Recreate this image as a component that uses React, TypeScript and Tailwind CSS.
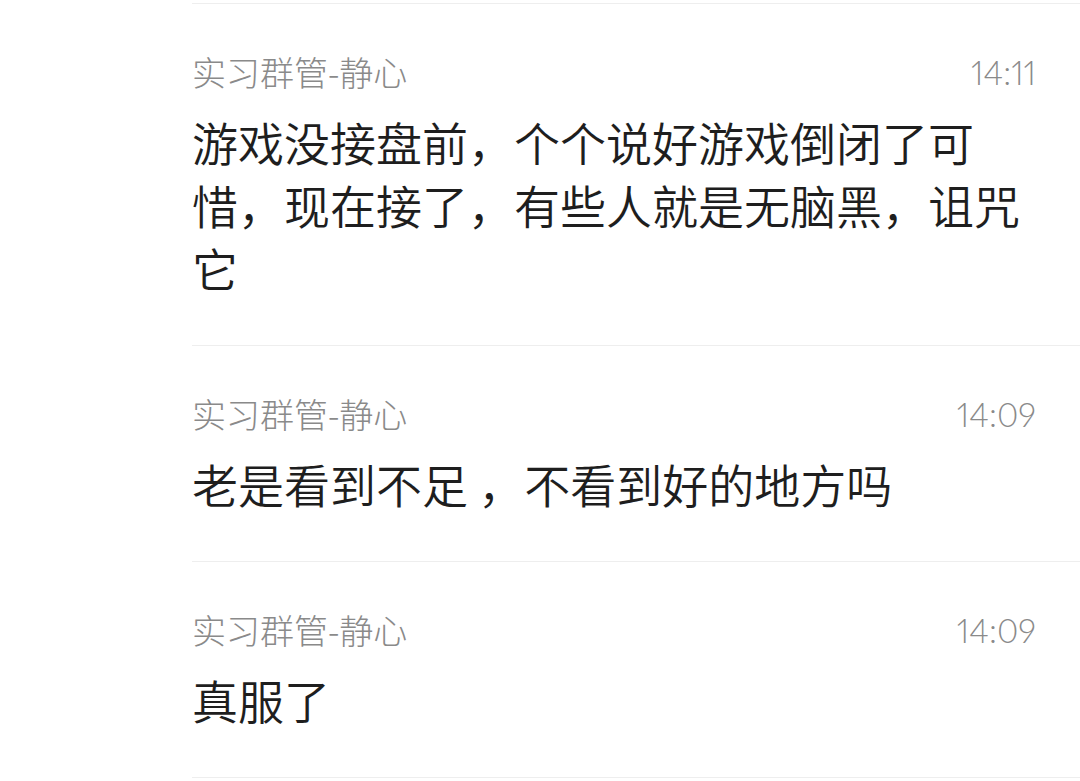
const MESSAGES = [
  {
    name: "实习群管-静心",
    time: "14:11",
    text: "游戏没接盘前，个个说好游戏倒闭了可惜，现在接了，有些人就是无脑黑，诅咒它",
  },
  {
    name: "实习群管-静心",
    time: "14:09",
    text: "老是看到不足 ，不看到好的地方吗",
  },
  {
    name: "实习群管-静心",
    time: "14:09",
    text: "真服了",
  },
];

const FONT = "font-['Noto_Sans_CJK_SC','Noto_Sans',sans-serif]";

export default function App() {
  return (
    <div className={`min-h-[781px] w-[1080px] overflow-hidden bg-white ${FONT}`}>
      <div className="ml-[192px] h-[4px] border-b border-[#eeeeee]" />
      <ul role="list">
        {MESSAGES.map(({ name, time, text }, i) => (
          <li
            key={i}
            className="ml-[192px] border-b border-[#eeeeee] pr-[44px] pt-[48px] pb-[46px]"
          >
            <div className="flex h-[40px] items-center justify-between">
              <span className="text-[34px] font-light leading-[40px] text-[#8a8a8a]">
                {name}
              </span>
              <span className="font-['Lato',sans-serif] text-[33px] font-light leading-[40px] text-[#8a8a8a] proportional-nums">
                {time}
              </span>
            </div>
            <p className="mt-[18px] text-[46px] font-[350] leading-[63px] text-[#1e1e1e]">
              {text}
            </p>
          </li>
        ))}
      </ul>
    </div>
  );
}
